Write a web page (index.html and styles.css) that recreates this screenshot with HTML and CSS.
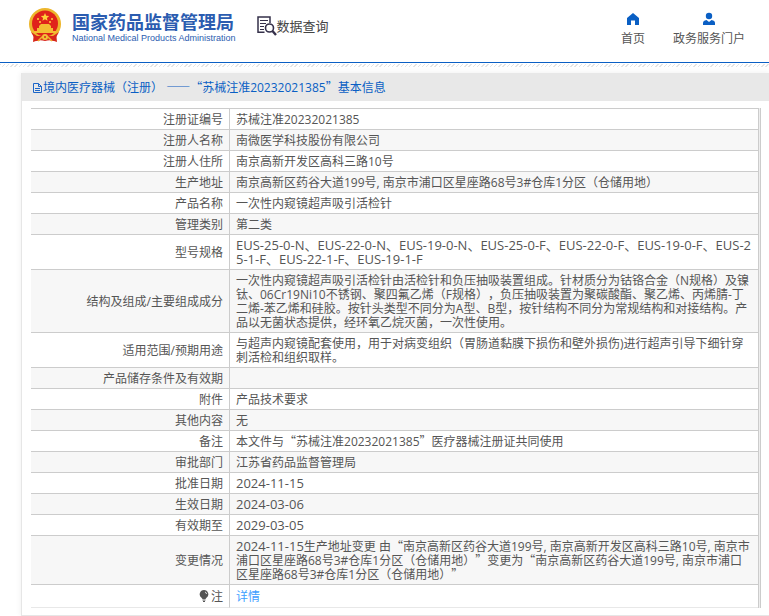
FILE: index.html
```
<!DOCTYPE html>
<html lang="zh-CN">
<head>
<meta charset="utf-8">
<title>国家药品监督管理局 数据查询</title>
<link rel="stylesheet" href="styles.css">
</head>
<body>
<header class="top">
  <a class="brand" href="#">
    <svg class="emblem" viewBox="0 0 34 36" aria-hidden="true">
      <path d="M6 24 5 34q6-3 12-1 6-2 12 1l-1-10z" fill="#d8261c"/>
      <circle cx="17" cy="16" r="16" fill="#edb62c"/>
      <circle cx="17" cy="15.500" r="13" fill="#e0231b"/>
      <path d="M17 5l1.200 2.700 3 .3-2.300 1.900.7 2.900-2.600-1.500-2.600 1.500.7-2.900L12.800 8l3-.3z" fill="#ffd23a"/>
      <g fill="#ffd23a"><circle cx="10" cy="11" r="1"/><circle cx="24" cy="11" r="1"/><circle cx="12" cy="14" r="1"/><circle cx="22" cy="14" r="1"/></g>
      <path d="M11 18l2-2h8l2 2v2h2v3H9v-3h2z" fill="#f4bd32"/>
      <path d="M6 24h22" stroke="#f4bd32" stroke-width="2"/>
      <path d="M3 24l5 9q9-3 18 0l5-9-6 4H9z" fill="#d8261c"/>
      <path d="M10 33l4-4h6l4 4" fill="none" stroke="#efb52d" stroke-width="1.500"/>
      <circle cx="17" cy="29" r="3" fill="#f2c037"/>
      <circle cx="17" cy="29" r="1" fill="#d8261c"/>
    </svg>
    <span class="names">
      <span class="name-zh">国家药品监督管理局</span>
      <span class="name-en">National Medical Products Administration</span>
    </span>
  </a>
  <a class="query" href="#">
    <svg class="query-icon" viewBox="0 0 20 20" aria-hidden="true" fill="none" stroke="#35304a">
      <path d="M7.500 16.300H1V1h12v6" stroke-width="1.500"/>
      <path d="M3 4.500h8M3 7.500h6M3 10.500h4M3 13.500h4" stroke-width="1"/>
      <circle cx="12.500" cy="12" r="4" stroke-width="1.600"/>
      <path d="M15.500 15l3.500 4" stroke-width="2.400"/>
    </svg>
    <span>数据查询</span>
  </a>
  <nav class="nav">
    <a href="#">
      <svg viewBox="0 0 14 14" aria-hidden="true"><path d="M7 1L1 6v7h4V8.500h4V13h4V6z" fill="#0a5fc4"/></svg>
      首页
    </a>
    <a href="#">
      <svg viewBox="0 0 14 14" aria-hidden="true"><circle cx="7" cy="4" r="3.200" fill="#0a5fc4"/><path d="M1 13v-2q0-2.500 3.500-3L7 10l2.500-2Q13 8.500 13 11v2z" fill="#0a5fc4"/></svg>
      政务服务门户
    </a>
  </nav>
</header>
<div class="hatch"></div>
<main class="card">
  <h1 class="title">
    <svg class="doc" viewBox="0 0 11 12" aria-hidden="true" fill="none" stroke="#1c66c8"><path d="M1.500 1.500h5l3 3v6h-8zM6.500 1.500v3h3M3 6.500h5M3 8.500h5"/></svg>
    <span>境内医疗器械（注册） <span class="cjk">——“</span>苏械注准20232021385<span class="cjk">”</span>基本信息</span>
  </h1>
  <div class="frame">
    <table class="info">
      <tbody>
        <tr><th scope="row">注册证编号</th><td>苏械注准20232021385</td></tr>
        <tr><th scope="row">注册人名称</th><td>南微医学科技股份有限公司</td></tr>
        <tr><th scope="row">注册人住所</th><td>南京高新开发区高科三路10号</td></tr>
        <tr><th scope="row">生产地址</th><td>南京高新区药谷大道199号, 南京市浦口区星座路68号3#仓库1分区（仓储用地）</td></tr>
        <tr><th scope="row">产品名称</th><td>一次性内窥镜超声吸引活检针</td></tr>
        <tr><th scope="row">管理类别</th><td>第二类</td></tr>
        <tr><th scope="row">型号规格</th><td class="code">EUS-25-0-N、EUS-22-0-N、EUS-19-0-N、EUS-25-0-F、EUS-22-0-F、EUS-19-0-F、EUS-2<br>5-1-F、EUS-22-1-F、EUS-19-1-F</td></tr>
        <tr><th scope="row">结构及组成/主要组成成分</th><td>一次性内窥镜超声吸引活检针由活检针和负压抽吸装置组成。针材质分为钴铬合金（N规格）及镍<br>钛、06Cr19Ni10不锈钢、聚四氟乙烯（F规格），负压抽吸装置为聚碳酸酯、聚乙烯、丙烯腈-丁<br>二烯-苯乙烯和硅胶。按针头类型不同分为A型、B型，按针结构不同分为常规结构和对接结构。产<br>品以无菌状态提供，经环氧乙烷灭菌，一次性使用。</td></tr>
        <tr><th scope="row">适用范围/预期用途</th><td>与超声内窥镜配套使用，用于对病变组织（胃肠道黏膜下损伤和壁外损伤)进行超声引导下细针穿<br>刺活检和组织取样。</td></tr>
        <tr><th scope="row">产品储存条件及有效期</th><td></td></tr>
        <tr><th scope="row">附件</th><td>产品技术要求</td></tr>
        <tr><th scope="row">其他内容</th><td>无</td></tr>
        <tr><th scope="row">备注</th><td>本文件与<span class="cjk">“</span>苏械注准20232021385<span class="cjk">”</span>医疗器械注册证共同使用</td></tr>
        <tr><th scope="row">审批部门</th><td>江苏省药品监督管理局</td></tr>
        <tr><th scope="row">批准日期</th><td class="code">2024-11-15</td></tr>
        <tr><th scope="row">生效日期</th><td class="code">2024-03-06</td></tr>
        <tr><th scope="row">有效期至</th><td class="code">2029-03-05</td></tr>
        <tr><th scope="row">变更情况</th><td><span class="code">2024-11-15</span>生产地址变更 由<span class="cjk">“</span>南京高新区药谷大道199号, 南京高新开发区高科三路10号, 南京市<br>浦口区星座路68号3#仓库1分区（仓储用地）<span class="cjk">”</span>变更为<span class="cjk">“</span>南京高新区药谷大道199号, 南京市浦口<br>区星座路68号3#仓库1分区（仓储用地）<span class="cjk">”</span></td></tr>
        <tr class="note"><th scope="row"><svg class="bulb" viewBox="0 0 10 12" aria-hidden="true"><path d="M5 0a4.300 4.300 0 0 0-2.500 7.800L3.500 9h3l1-1.200A4.300 4.300 0 0 0 5 0z" fill="#555"/><path d="M3.500 10h3M4 11.500h2" stroke="#555"/><path d="M6 2q1.500.5 1.500 2" fill="none" stroke="#fff" stroke-width=".8"/></svg>注</th><td><a href="#">详情</a></td></tr>
      </tbody>
    </table>
  </div>
</main>
</body>
</html>
```
FILE: styles.css
```
* {
  box-sizing: border-box;
}

body {
  margin: 0;
  background: #fff;
  color: #555;
  font: 12px/14px "Open Sans", "Noto Sans CJK SC", sans-serif;
  text-spacing-trim: space-all;
}

a {
  color: inherit;
  text-decoration: none;
}

.cjk {
  font-family: "Noto Sans CJK SC", sans-serif;
  line-height: 1;
}

.code {
  font-size: 13px;
}

span.code {
  line-height: 1;
}

.top {
  display: flex;
  align-items: flex-start;
  height: 63px;
  padding: 8px 24px 0 28px;
  border-bottom: 1px solid #0a5fc4;
}

.brand {
  display: flex;
  gap: 10px;
  color: #2b5cb0;
}

.emblem {
  width: 34px;
  height: 36px;
}

.names {
  display: flex;
  flex-direction: column;
  padding-top: 3px;
  white-space: nowrap;
}

.name-zh {
  font: bold 18px/20px "Noto Sans CJK SC", sans-serif;
}

.name-en {
  font: 9px/14px "Liberation Sans", sans-serif;
}

.query {
  display: flex;
  align-items: center;
  margin-top: 8px;
  margin-left: 21px;
  color: #444;
  font-size: 13px;
  line-height: 20px;
}

.query-icon {
  width: 20px;
  height: 20px;
}

.nav {
  display: flex;
  gap: 28px;
  margin-left: auto;
  padding-top: 4px;
}

.nav a {
  display: flex;
  flex-direction: column;
  align-items: center;
  gap: 6px;
}

.nav svg {
  width: 14px;
  height: 14px;
}

.hatch {
  height: 3px;
  margin-top: 1px;
  background: repeating-linear-gradient(135deg, #e4e4e4 0 1px, #fff 1px 3px);
}

.card {
  margin: 6px 0 0 21px;
  border: 1px solid #e6e6e6;
  border-width: 0 0 1px 1px;
  box-shadow: 0 0 6px #eee;
}

.title {
  display: flex;
  align-items: center;
  height: 28px;
  margin: 0;
  padding-top: 2px;
  padding-left: 10px;
  background: #e8e8e8;
  color: #0a5fc4;
  font-size: 12px;
  font-weight: normal;
}

.doc {
  width: 11px;
  height: 12px;
}

.frame {
  margin: 7px 8px 7px 9px;
  padding-right: 1px;
  border-right: 1px solid #ccc;
  background: #eee;
}

.info {
  width: 100%;
  border-spacing: 0;
  border-top: 1px solid #ccc;
  border-right: 1px solid #ccc;
  background: #fff;
}

.info th,
.info td {
  height: 21px;
  padding: 4px 6px 2px;
  border-bottom: 1px solid #ccc;
  font-weight: normal;
}

.info th {
  width: 199px;
  border-right: 1px solid #ccc;
  text-align: right;
}

.info td {
  padding-right: 0;
  white-space: nowrap;
}

.info td.code {
  padding-top: 3px;
  padding-bottom: 3px;
}

.info tr:nth-child(even) {
  background: #f7f7f7;
}

.info .note th,
.info .note td {
  height: 23px;
  border-bottom-color: #e8e8e8;
}

.note a {
  color: #409eff;
}

.bulb {
  width: 10px;
  height: 12px;
  margin-right: 2px;
  vertical-align: -1px;
}
```
